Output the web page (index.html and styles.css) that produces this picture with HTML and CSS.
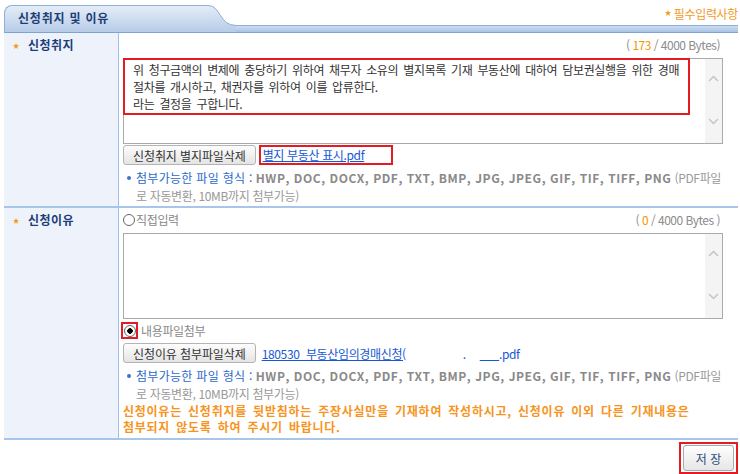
FILE: index.html
```html
<!DOCTYPE html>
<html lang="ko">
<head>
    <meta charset="UTF-8">
    <title>신청취지 및 이유</title>
    <link rel="stylesheet" href="styles.css">
</head>
<body>

    <div class="panel">
        <!-- 상단 탭 -->
        <div class="head">
            <div class="tab">신청취지 및 이유</div>
            <svg class="tab-curve" width="28" height="27" viewBox="0 0 28 27">
                <defs>
                    <linearGradient id="tabfill" x1="0" y1="0" x2="0" y2="1">
                        <stop offset="0" stop-color="#e4edf8"/>
                        <stop offset="1" stop-color="#b7cce8"/>
                    </linearGradient>
                </defs>
                <path d="M0,0 C13,0 11,20 28,20 L28,27 L0,27 Z" fill="url(#tabfill)"/>
                <path d="M0,0.5 C13,0.5 11,20.5 28,20.5" fill="none" stroke="#90b0da" stroke-width="1"/>
            </svg>
            <div class="head-right">
                <p class="required"><svg class="req-star" width="6" height="6" viewBox="0 0 6 6"><path d="M3,0 L3.8,2.1 L6,2.2 L4.3,3.6 L4.9,6 L3,4.6 L1.1,6 L1.7,3.6 L0,2.2 L2.2,2.1 Z" fill="#f39a1e"/></svg> 필수입력사항</p>
                <div class="bar"></div>
            </div>
        </div>

        <!-- 신청취지 -->
        <div class="row">
            <div class="row-label"><svg class="star" width="6" height="6" viewBox="0 0 6 6"><path d="M3,0 L3.8,2.1 L6,2.2 L4.3,3.6 L4.9,6 L3,4.6 L1.1,6 L1.7,3.6 L0,2.2 L2.2,2.1 Z" fill="#f39a1e"/></svg>신청취지</div>
            <div class="row-body">
                <div class="count">( <em>173</em> / 4000 Bytes)</div>
                <div class="textarea">
                    <div class="textarea-text">
                        <div class="mark-box">
                            위 청구금액의 변제에 충당하기 위하여 채무자 소유의 별지목록 기재 부동산에 대하여 담보권실행을 위한 경매<br>
                            절차를 개시하고, 채권자를 위하여 이를 압류한다.<br>
                            라는 결정을 구합니다.
                        </div>
                    </div>
                    <div class="scroll">
                        <svg width="11" height="7" viewBox="0 0 11 7"><path d="M1,6 L5.5,1.5 L10,6" fill="none" stroke="#c4c4c4" stroke-width="1.5"/></svg>
                        <svg width="11" height="7" viewBox="0 0 11 7"><path d="M1,1 L5.5,5.5 L10,1" fill="none" stroke="#c4c4c4" stroke-width="1.5"/></svg>
                    </div>
                </div>
                <div class="file-row">
                    <button type="button" class="btn">신청취지 별지파일삭제</button>
                    <span class="mark-link"><a href="#" class="file-link">별지 부동산 표시.pdf</a></span>
                </div>
                <div class="note">
                    <span class="dot"></span>
                    <p class="note-text"><span class="note-label">첨부가능한 파일 형식 :</span> <b>HWP, DOC, DOCX, PDF, TXT, BMP, JPG, JPEG, GIF, TIF, TIFF, PNG</b> (PDF파일<br>로 자동변환, 10MB까지 첨부가능)</p>
                </div>
            </div>
        </div>

        <!-- 신청이유 -->
        <div class="row">
            <div class="row-label"><svg class="star" width="6" height="6" viewBox="0 0 6 6"><path d="M3,0 L3.8,2.1 L6,2.2 L4.3,3.6 L4.9,6 L3,4.6 L1.1,6 L1.7,3.6 L0,2.2 L2.2,2.1 Z" fill="#f39a1e"/></svg>신청이유</div>
            <div class="row-body">
                <div class="radio-row">
                    <label class="radio"><span class="radio-dot"></span>직접입력</label>
                    <div class="count">( <em>0</em> / 4000 Bytes )</div>
                </div>
                <div class="textarea">
                    <div class="textarea-text"></div>
                    <div class="scroll">
                        <svg width="11" height="7" viewBox="0 0 11 7"><path d="M1,6 L5.5,1.5 L10,6" fill="none" stroke="#c4c4c4" stroke-width="1.5"/></svg>
                        <svg width="11" height="7" viewBox="0 0 11 7"><path d="M1,1 L5.5,5.5 L10,1" fill="none" stroke="#c4c4c4" stroke-width="1.5"/></svg>
                    </div>
                </div>
                <label class="radio radio-file"><span class="mark-radio"><span class="radio-dot checked"></span></span>내용파일첨부</label>
                <div class="file-row file-row-2">
                    <button type="button" class="btn">신청이유 첨부파일삭제</button>
                    <a href="#" class="file-link">180530_부동산임의경매신청(</a><span class="blank-a"></span><span class="file-link-plain">.</span><span class="blank-b"></span><a href="#" class="file-link">___</a><span class="file-link-plain">.pdf</span>
                </div>
                <div class="note">
                    <span class="dot"></span>
                    <p class="note-text"><span class="note-label">첨부가능한 파일 형식 :</span> <b>HWP, DOC, DOCX, PDF, TXT, BMP, JPG, JPEG, GIF, TIF, TIFF, PNG</b> (PDF파일<br>로 자동변환, 10MB까지 첨부가능)</p>
                </div>
                <p class="warning">신청이유는 신청취지를 뒷받침하는 주장사실만을 기재하여 작성하시고, 신청이유 이외 다른 기재내용은<br>첨부되지 않도록 하여 주시기 바랍니다.</p>
            </div>
        </div>

        <!-- 저장 버튼 -->
        <div class="actions">
            <span class="mark-save"><button type="button" class="btn-save">저 장</button></span>
        </div>
    </div>

</body>
</html>
```

FILE: styles.css
```css
body {
    margin: 0;
    background-color: #fff;
    font-family: "Noto Sans CJK KR", "Noto Sans", sans-serif;
    font-size: 12px;
    color: #333;
    letter-spacing: -0.35px;
}

p {
    margin: 0;
}

.panel {
    margin: 0 2px 0 4px;
}

/* 상단 탭 */
.head {
    display: flex;
    align-items: flex-end;
    height: 33px;
    box-sizing: border-box;
    border-bottom: 1px solid #7ea2d2;
}

.tab {
    width: 204px;
    height: 27px;
    box-sizing: border-box;
    border: 1px solid #90b0da;
    border-right: 0;
    border-bottom: 0;
    border-top-left-radius: 8px;
    background: linear-gradient(#e4edf8, #b7cce8);
    padding-left: 13px;
    line-height: 23px;
    font-weight: bold;
    letter-spacing: 0.8px;
    color: #1f3e75;
}

.tab-curve {
    display: block;
}

.head-right {
    flex: 1;
    display: flex;
    flex-direction: column;
}

.required {
    text-align: right;
    color: #f39a1e;
    line-height: 14px;
    margin-bottom: 4px;
}

.req-star {
    vertical-align: 3px;
}

.bar {
    height: 6px;
    border-top: 1px solid #8eb0da;
    background: linear-gradient(#cddcf0, #a8c3e6);
}

/* 입력 행 */
.row {
    display: grid;
    grid-template-columns: 115px 1fr;
    border-bottom: 2px solid #a8c5ec;
}

.row-label {
    background-color: #eef3fb;
    border-right: 1px solid #a3c0e8;
    padding: 3px 0 0 9px;
    line-height: 18px;
    font-weight: bold;
    letter-spacing: 0.5px;
    color: #1c3d7a;
}

.star {
    margin-right: 9px;
    vertical-align: 1px;
}

.row-body {
    padding: 3px 15px 1px 4px;
}

.count {
    text-align: right;
    line-height: 18px;
    padding-right: 3px;
    color: #8c8c8c;
    letter-spacing: -0.5px;
}

.count em {
    font-style: normal;
    color: #f39800;
}

.textarea {
    display: flex;
    height: 86px;
    margin-top: 4px;
    box-sizing: border-box;
    border: 1px solid #aaa;
}

.textarea-text {
    flex: 1;
}

.mark-box {
    width: 567px;
    height: 57px;
    box-sizing: border-box;
    margin: -1px 0 0 -1px;
    border: 2px solid #e51b24;
    padding: 1px 8px 0;
    line-height: 17px;
    color: #333;
    word-spacing: 2px;
    white-space: nowrap;
}

.scroll {
    width: 17px;
    background-color: #f4f4f4;
    display: flex;
    flex-direction: column;
    justify-content: space-between;
    align-items: center;
    padding: 16px 0 18px;
}

.scroll svg {
    display: block;
}

/* 첨부파일 */
.file-row {
    display: flex;
    align-items: center;
    gap: 3px;
    margin-top: 1px;
}

.btn {
    height: 20px;
    padding: 0 9px;
    border: 1px solid #b4b4b4;
    border-radius: 3px;
    background: linear-gradient(#fdfdfd, #e4e4e4);
    font-family: inherit;
    font-size: 12px;
    letter-spacing: -0.1px;
    color: #333;
}

.mark-link {
    width: 134px;
    height: 20px;
    box-sizing: border-box;
    border: 2px solid #e51b24;
    padding-left: 2px;
    line-height: 16px;
}

.file-link {
    color: #1558d6;
    text-decoration: underline;
}

.file-link-plain {
    color: #1558d6;
}

.file-row-2 {
    gap: 0;
    margin-top: 4px;
}

.file-row-2 .btn {
    margin-right: 6px;
}

.blank-a {
    display: inline-block;
    width: 57px;
}

.blank-b {
    display: inline-block;
    width: 14px;
}

.note {
    display: flex;
    margin-top: 4px;
}

.dot {
    width: 4px;
    height: 4px;
    border-radius: 50%;
    background-color: #3f73c9;
    margin: 7px 5px 0 4px;
}

.note-text {
    line-height: 18px;
    color: #999;
    white-space: nowrap;
}

.note-label {
    color: #2a6acb;
    letter-spacing: 0.3px;
}

.note-text b {
    color: #8a8a8a;
    letter-spacing: 0.55px;
}

/* 신청이유 */
.radio-row {
    display: flex;
    justify-content: space-between;
    line-height: 18px;
}

.radio {
    display: flex;
    align-items: center;
    color: #888;
}

.radio-dot {
    width: 12px;
    height: 12px;
    box-sizing: border-box;
    border: 1px solid #666;
    border-radius: 50%;
    background-color: #fff;
    margin-right: 1px;
}

.radio-dot.checked {
    background: radial-gradient(#000 2.5px, #fff 3px);
    margin-right: 0;
}

.radio-file {
    height: 17px;
    margin: 3px 0 0 -2px;
}

.mark-radio {
    display: flex;
    align-items: center;
    justify-content: center;
    width: 17px;
    height: 17px;
    box-sizing: border-box;
    border: 2px solid #e51b24;
    margin-right: 3px;
}

.warning {
    line-height: 16px;
    font-weight: bold;
    color: #f7941d;
    margin-bottom: 2px;
    letter-spacing: 0.75px;
    word-spacing: 2px;
    white-space: nowrap;
}

/* 저장 버튼 */
.actions {
    display: flex;
    justify-content: flex-end;
    padding-top: 2px;
}

.mark-save {
    border: 2px solid #e51b24;
    padding: 1px 2px;
}

.btn-save {
    display: block;
    width: 51px;
    height: 26px;
    border: 1px solid #aaa;
    border-radius: 3px;
    background: linear-gradient(#fefefe, #e6e6e6);
    font-family: inherit;
    font-size: 12px;
    letter-spacing: 0;
    color: #2c4b80;
}
```
